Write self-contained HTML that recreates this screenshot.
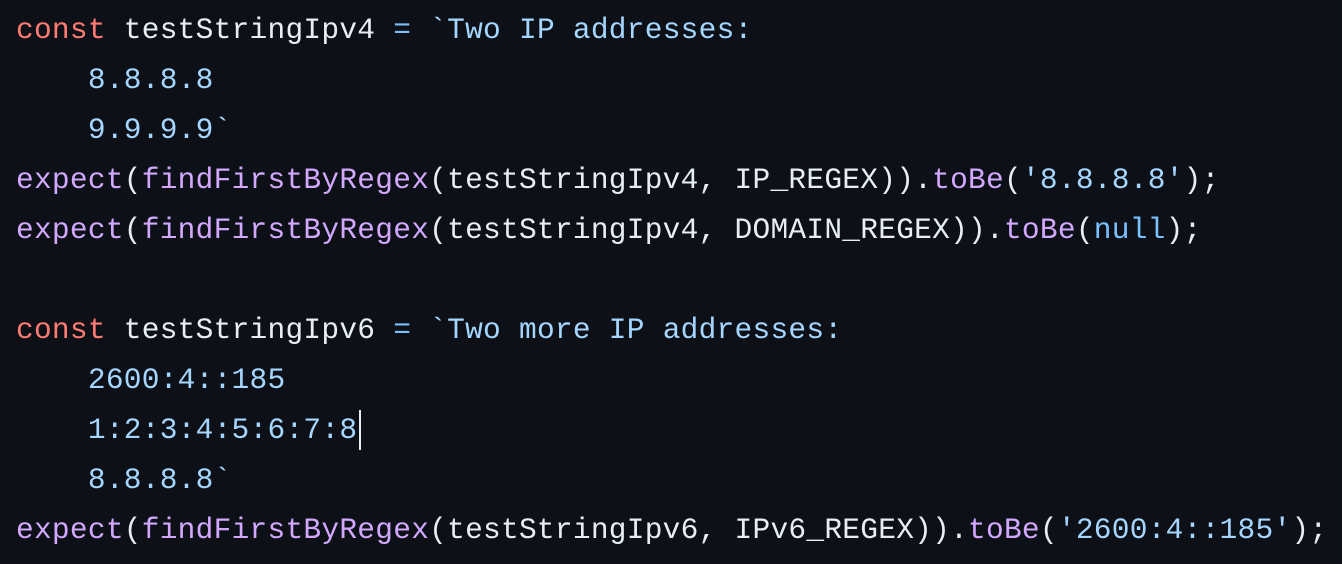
<!DOCTYPE html>
<html><head><meta charset="utf-8"><style>
html,body{margin:0;padding:0;background:#0d1117;width:1342px;height:564px;overflow:hidden}
pre{margin:0;padding:5px 0 0 16px;font-family:"Liberation Mono",monospace;font-size:29.5px;letter-spacing:0.26px;line-height:50px;color:#e6edf3}
.k{color:#ff7b72}.s{color:#a5d6ff}.f{color:#d2a8ff}.c{color:#79c0ff}
.cur{display:inline-block;width:2px;height:40px;background:#e6edf3;vertical-align:middle;margin-left:2px}
</style></head><body><pre><span class="k">const</span> testStringIpv4 <span class="c">=</span> <span class="s">`Two IP addresses:
    8.8.8.8
    9.9.9.9`</span>
<span class="f">expect</span>(<span class="f">findFirstByRegex</span>(testStringIpv4, IP_REGEX)).<span class="f">toBe</span>(<span class="s">'8.8.8.8'</span>);
<span class="f">expect</span>(<span class="f">findFirstByRegex</span>(testStringIpv4, DOMAIN_REGEX)).<span class="f">toBe</span>(<span class="c">null</span>);

<span class="k">const</span> testStringIpv6 <span class="c">=</span> <span class="s">`Two more IP addresses:
    2600:4::185
    1:2:3:4:5:6:7:8<span class="cur"></span>
    8.8.8.8`</span>
<span class="f">expect</span>(<span class="f">findFirstByRegex</span>(testStringIpv6, IPv6_REGEX)).<span class="f">toBe</span>(<span class="s">'2600:4::185'</span>);</pre></body></html>
